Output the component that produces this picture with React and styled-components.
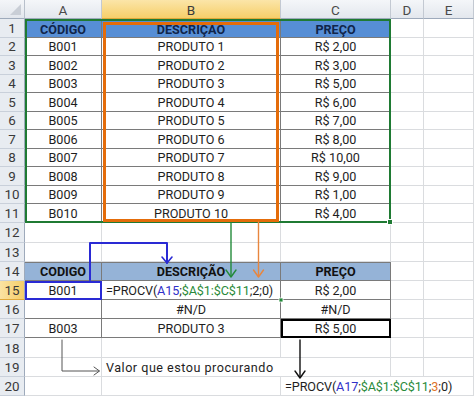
import styled, { createGlobalStyle } from "styled-components"

const Global = createGlobalStyle`
  html, body { margin: 0; padding: 0; background: #fff; overflow: hidden; }
`

const Sheet = styled.div`
  position: relative;
  display: grid;
  grid-template-columns: 25px 77px 179px 110px 33px 1fr;
  grid-template-rows: 19px repeat(11, 18.5px) 20px repeat(8, 19.2px);
  width: 474px;
  height: 398px;
  overflow: hidden;
  background: #fff;
  font-family: Roboto, "Liberation Sans", sans-serif;
  font-size: 12.6px;
  color: #1e1e1e;
`

const Corner = styled.div`
  grid-row: 1;
  grid-column: 1;
  position: relative;
  background: linear-gradient(#f4f6f9, #e2e6ec);
  border-right: 1px solid #b8c0cb;
  border-bottom: 1px solid #9eaabb;
  &::after {
    content: "";
    position: absolute;
    right: 3px;
    bottom: 3px;
    border-style: solid;
    border-width: 0 0 11px 11px;
    border-color: transparent transparent #c9ced6 transparent;
  }
`

const ColHead = styled.div`
  grid-row: 1;
  grid-column: ${p => p.$c + 1};
  display: flex;
  align-items: center;
  justify-content: center;
  padding-top: 1px;
  font-size: 13.5px;
  color: ${p => (p.$active ? "#3b3b3b" : "#4a4a4a")};
  background: ${p =>
    p.$active
      ? "linear-gradient(#fbe5a8, #f6cf6a)"
      : "linear-gradient(#f4f6f9, #e3e7ed)"};
  border-right: 1px solid #c3c9d2;
  border-bottom: 1px solid ${p => (p.$active ? "#e0a93a" : "#9eaabb")};
`

const RowHead = styled.div`
  grid-column: 1;
  grid-row: ${p => p.$r + 1};
  display: flex;
  align-items: center;
  justify-content: center;
  padding-top: 1px;
  font-size: 13.4px;
  color: #3a3a3a;
  background: ${p =>
    p.$active ? "linear-gradient(90deg, #fbe3a2, #f5cd68)" : "#e8ecf1"};
  border-right: 1px solid #9eaabb;
  border-bottom: 1px solid ${p => (p.$active ? "#e0a93a" : "#c9d0da")};
`

const Cell = styled.div`
  grid-row: ${p => p.$r + 1};
  grid-column: ${p => p.$c + 1} / span ${p => p.$span || 1};
  display: flex;
  align-items: center;
  justify-content: ${p => (p.$left ? "flex-start" : "center")};
  padding: ${p => p.$padTop || "1px"} ${p => (p.$left ? "4px" : "0")} 0;
  white-space: nowrap;
  overflow: visible;
  letter-spacing: ${p => p.$spacing || "0"};
  font-weight: ${p => (p.$bold ? 700 : 400)};
  color: ${p => p.$color || "#1e1e1e"};
  background: ${p => p.$bg || "transparent"};
  border-right: 1px solid ${p => (p.$dark ? "#7a7a7a" : "#dadcdf")};
  border-bottom: 1px solid ${p => (p.$dark ? "#7a7a7a" : "#dadcdf")};
  box-shadow: ${p => (p.$top ? "inset 0 1px 0 #7a7a7a" : "none")};
`

const Frame = styled.div`
  grid-row: ${p => p.$rows};
  grid-column: ${p => p.$cols};
  margin: ${p => p.$margin || "0"};
  border: ${p => p.$w}px solid ${p => p.$color};
  box-sizing: border-box;
  pointer-events: none;
  z-index: ${p => p.$z || 2};
  position: relative;
  &::after {
    content: "";
    display: ${p => (p.$handle ? "block" : "none")};
    position: absolute;
    right: -4px;
    bottom: -4px;
    width: 4px;
    height: 4px;
    background: ${p => p.$color};
    border: 1px solid #fff;
  }
`

const Arrows = styled.svg`
  position: absolute;
  left: 0;
  top: 0;
  width: 474px;
  height: 398px;
  pointer-events: none;
  z-index: 3;
`

const Ref = styled.span`
  color: ${p => p.$c};
`

const BLUE = "#3030c8"
const GREEN = "#2a8a3a"
const ORANGE = "#e0732a"

const prices = ["2,00", "3,00", "5,00", "6,00", "7,00", "8,00", "10,00", "9,00", "1,00", "4,00"]

function buildCells() {
  const cells = {}
  const set = (r, c, props) => {
    cells[`${r}-${c}`] = props
  }
  // tabela principal
  const head = { bold: true, bg: "#568ed5", color: "#10254a", dark: true, padTop: "4px" }
  set(1, 1, { ...head, text: "CÓDIGO" })
  set(1, 2, { ...head, text: "DESCRIÇAO" })
  set(1, 3, { ...head, text: "PREÇO" })
  prices.forEach((p, i) => {
    const r = i + 2
    const n = String(i + 1).padStart(3, "0")
    set(r, 1, { dark: true, text: `B${n}` })
    set(r, 2, { dark: true, text: `PRODUTO ${i + 1}` })
    set(r, 3, { dark: true, text: `R$ ${p}` })
  })
  // tabela de consulta
  const head2 = { bold: true, bg: "#95b3d7", color: "#111", dark: true, top: true }
  set(14, 1, { ...head2, text: "CODIGO" })
  set(14, 2, { ...head2, text: "DESCRIÇÃO" })
  set(14, 3, { ...head2, text: "PREÇO" })
  set(15, 1, { dark: true, text: "B001" })
  set(15, 2, {
    dark: true,
    left: true,
    spacing: "-0.1px",
    text: (
      <>
        =PROCV(<Ref $c={BLUE}>A15</Ref>;<Ref $c={GREEN}>$A$1:$C$11</Ref>;2;0)
      </>
    ),
  })
  set(15, 3, { dark: true, text: "R$ 2,00" })
  set(16, 1, { dark: true, text: "" })
  set(16, 2, { dark: true, text: "#N/D" })
  set(16, 3, { dark: true, text: "#N/D" })
  set(17, 1, { dark: true, text: "B003" })
  set(17, 2, { dark: true, text: "PRODUTO 3" })
  set(17, 3, { dark: true, text: "R$ 5,00" })
  set(19, 2, { left: true, span: 2, spacing: "0.5px", text: "Valor que estou procurando" })
  set(20, 3, {
    left: true,
    span: 3,
    spacing: "-0.1px",
    text: (
      <>
        =PROCV(<Ref $c={BLUE}>A17</Ref>;<Ref $c={GREEN}>$A$1:$C$11</Ref>;<Ref $c={ORANGE}>3</Ref>;0)
      </>
    ),
  })
  return cells
}

const CELLS = buildCells()

function Body() {
  const out = []
  for (let r = 1; r <= 20; r++) {
    let skip = 0
    for (let c = 1; c <= 5; c++) {
      if (skip > 0) {
        skip--
        continue
      }
      const d = CELLS[`${r}-${c}`] || {}
      if (d.span) skip = d.span - 1
      out.push(
        <Cell
          key={`${r}-${c}`}
          $r={r}
          $c={c}
          $span={d.span}
          $left={d.left}
          $bold={d.bold}
          $bg={d.bg}
          $color={d.color}
          $dark={d.dark}
          $top={d.top}
          $spacing={d.spacing}
          $padTop={d.padTop}
        >
          {d.text}
        </Cell>
      )
    }
  }
  return out
}

export default function App() {
  const cols = ["A", "B", "C", "D", "E"]
  return (
    <>
      <Global />
      <Sheet>
        <Corner />
        {cols.map((l, i) => (
          <ColHead key={l} $c={i + 1} $active={l === "B"}>
            {l}
          </ColHead>
        ))}
        {Array.from({ length: 20 }, (_, i) => (
          <RowHead key={i} $r={i + 1} $active={i + 1 === 15}>
            {i + 1}
          </RowHead>
        ))}
        <Body />

        <Frame $rows="2 / 13" $cols="2 / 5" $w={2} $color="#1f7a33" $handle />
        <Frame $rows="2 / 13" $cols="3 / 4" $w={3} $color="#e46c0a" $margin="3px 2px 1px 1px" $z={3} />
        <Frame $rows="16 / 17" $cols="2 / 3" $w={2} $color="#2a2ad4" />
        <Frame $rows="18 / 19" $cols="4 / 5" $w={2} $color="#000" />

        <Arrows viewBox="0 0 474 398">
          <g fill="none" strokeLinecap="round" strokeLinejoin="round">
            <polyline points="90,280 90,243 167,243 167,263" stroke="#2a2ad4" strokeWidth="2" />
            <polyline points="162,257 167,263 172,257" stroke="#2a2ad4" strokeWidth="1.6" />

            <line x1="231" y1="223" x2="231" y2="276" stroke="#238a3a" strokeWidth="1.4" />
            <polyline points="226,270 231,277 236,270" stroke="#238a3a" strokeWidth="1.4" />

            <line x1="258.5" y1="222" x2="258.5" y2="276" stroke="#e8863e" strokeWidth="1.4" />
            <polyline points="253.5,270 258.5,277 263.5,270" stroke="#e8863e" strokeWidth="1.4" />

            <line x1="300" y1="340" x2="300" y2="377" stroke="#111" strokeWidth="1.4" />
            <polyline points="295,371 300,378 305,371" stroke="#111" strokeWidth="1.4" />

            <polyline points="62,340 62,371 99,371" stroke="#555" strokeWidth="1" />
            <polyline points="94,367 99.5,371 94,375" stroke="#555" strokeWidth="1" />
          </g>
          <rect x="279" y="298" width="4" height="4" fill="#238a3a" stroke="#fff" strokeWidth="0.8" />
        </Arrows>
      </Sheet>
    </>
  )
}
